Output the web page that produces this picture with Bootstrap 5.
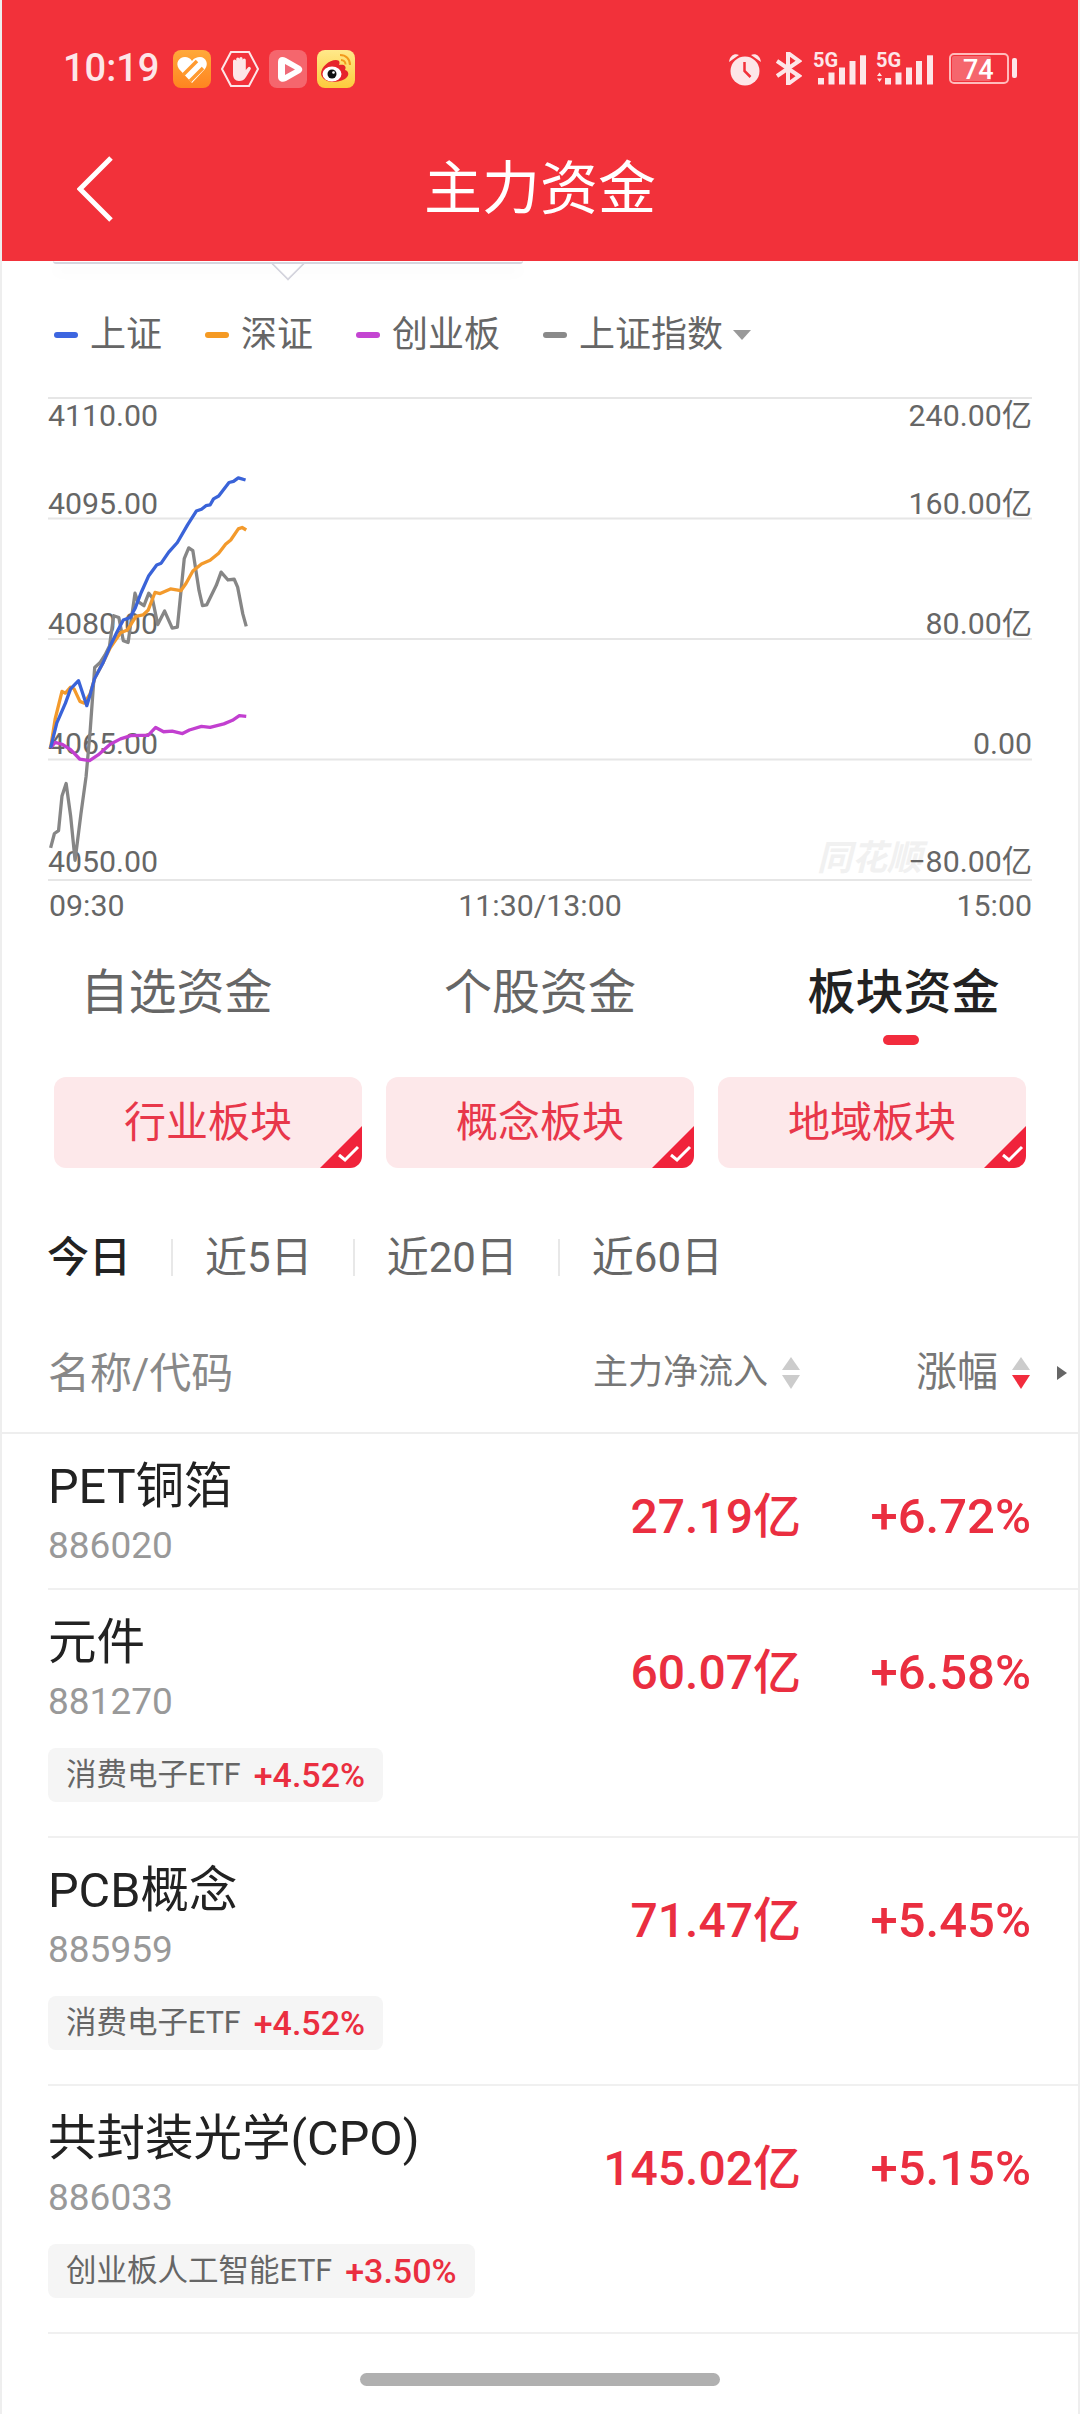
<!DOCTYPE html>
<html lang="zh">

<head>
    <meta charset="UTF-8">
    <meta name="viewport" content="width=device-width, initial-scale=1.0">
    <title>主力资金</title>
    <link href="https://cdn.jsdelivr.net/npm/bootstrap@5.3.3/dist/css/bootstrap.min.css" rel="stylesheet">
    <style>
        body {
            background-color: #fff;
            font-family: Roboto, "Noto Sans CJK SC", sans-serif;
            overflow: hidden;
        }

        .phone {
            width: 1080px;
            height: 2414px;
            overflow: hidden;
            border-left: 2px solid #eee;
            border-right: 2px solid #eee;
        }

        .top-bar {
            background-color: #f2313a;
            height: 261px;
            margin: 0 -2px;
            padding-top: 49px;
            color: #fff;
        }

        .status-row {
            height: 39px;
            padding: 0 63px;
        }

        .clock {
            font-size: 38px;
            font-weight: 500;
            color: #fde6e8;
            width: 110px;
            line-height: 39px;
        }

        .app-icons {
            gap: 10px;
        }

        .ic-bt {
            margin-left: 12px;
        }

        .ic-sig1 {
            margin-left: 11px;
        }

        .ic-sig2 {
            margin-left: 10px;
        }

        .ic-batt {
            margin-left: 16px;
        }

        .title-row {
            display: grid;
            grid-template-columns: 1fr auto 1fr;
            align-items: center;
            height: 82px;
            margin-top: 60px;
        }

        .back-col {
            padding-left: 77px;
        }

        .page-title {
            font-size: 58px;
            font-weight: 400;
            line-height: 82px;
        }

        .pop-stub {
            width: 470px;
            height: 3px;
            margin-left: 51px;
            border-bottom: 2px solid #d5d5de;
            border-radius: 0 0 8px 8px;
            box-shadow: 0 8px 14px rgba(0, 0, 0, .05);
            position: relative;
        }

        .pop-stub::after {
            content: "";
            position: absolute;
            left: 223px;
            top: -9px;
            width: 24px;
            height: 24px;
            background: #fff;
            border-right: 2px solid #d5d5de;
            border-bottom: 2px solid #d5d5de;
            transform: rotate(45deg);
            clip-path: polygon(100% 0, 100% 100%, 0 100%);
        }

        .legend-row {
            height: 50px;
            margin-top: 46px;
            padding-left: 52px;
            gap: 43px;
            font-size: 36px;
            color: #666;
        }

        .legend-item {
            gap: 12px;
        }

        .legend-dash {
            width: 24px;
            height: 6px;
            border-radius: 3px;
        }

        .dash-sh {
            background-color: #3d66e0;
        }

        .dash-sz {
            background-color: #f59a23;
        }

        .dash-cy {
            background-color: #c445d2;
        }

        .dash-idx {
            background-color: #8a8a8a;
        }

        .legend-caret {
            width: 0;
            height: 0;
            border-left: 9px solid transparent;
            border-right: 9px solid transparent;
            border-top: 10px solid #999;
            margin-left: -33px;
        }

        .chart-box {
            display: block;
            margin: 20px 0 0 -2px;
        }

        .chart-box text {
            font-family: Roboto, "Noto Sans CJK SC", sans-serif;
            font-size: 30.300px;
            fill: #666;
        }

        .chart-box .mark-text {
            font-size: 35px;
            font-weight: 700;
            font-style: italic;
            fill: #f1f1f1;
        }

        .chart-line {
            vector-effect: non-scaling-stroke;
            stroke-width: 3.300px;
            stroke-linejoin: round;
            fill: none;
        }

        .tab-grid {
            display: grid;
            grid-template-columns: repeat(3, 363.500px);
            justify-content: center;
            margin-top: 20px;
        }

        .tab-text {
            font-size: 48px;
            line-height: 60px;
            padding-top: 3px;
            color: #666;
        }

        .tab-on .tab-text {
            color: #222;
            font-weight: 500;
        }

        .tab-mark {
            width: 36px;
            height: 10px;
            margin: 12px 5px 0 0;
            border-radius: 5px;
        }

        .tab-on .tab-mark {
            background-color: #f22c3d;
        }

        .chip-row {
            gap: 24px;
            margin-top: 32px;
            padding-left: 52px;
        }

        .plate-chip {
            width: 308px;
            height: 91px;
            border-radius: 12px;
            background-color: #fde8ea;
            color: #e8374a;
            font-size: 42px;
            position: relative;
            overflow: hidden;
        }

        .chip-corner {
            position: absolute;
            right: 0;
            bottom: 0;
        }

        .period-row {
            height: 60px;
            margin-top: 59px;
            padding-left: 45px;
            font-size: 42px;
            color: #666;
        }

        .period-on {
            color: #222;
            font-weight: 500;
        }

        .period-sep {
            width: 2px;
            height: 37px;
            background-color: #e8e8e8;
            margin: 0 32px 0 40px;
        }

        .list-head {
            height: 120px;
            margin-top: 27px;
            padding-left: 46px;
            border-bottom: 2px solid #eee;
            color: #888;
        }

        .head-name {
            font-size: 42px;
        }

        .head-flow {
            font-size: 35px;
            color: #777;
            margin-left: auto;
        }

        .head-rise {
            font-size: 41px;
            margin-left: 116px;
            color: #777;
        }

        .sort-arrows {
            margin-left: 14px;
            gap: 5px;
        }

        .tri-up,
        .tri-down {
            width: 0;
            height: 0;
            border-left: 9px solid transparent;
            border-right: 9px solid transparent;
        }

        .tri-up {
            border-bottom: 13px solid #ccc;
        }

        .tri-down {
            border-top: 14px solid #ccc;
        }

        .tri-down.is-red {
            border-top-color: #f22c3d;
        }

        .more-tri {
            width: 0;
            height: 0;
            margin: 0 11px 0 27px;
            border-top: 7px solid transparent;
            border-bottom: 7px solid transparent;
            border-left: 10px solid #666;
        }

        .stock-row {
            margin-left: 46px;
            border-bottom: 2px solid #f0f0f0;
        }

        .stock-head {
            height: 154px;
        }

        .stock-id {
            padding-top: 23px;
            align-self: flex-start;
        }

        .stock-name {
            font-size: 48.500px;
            line-height: 60px;
            color: #222;
        }

        .stock-code {
            font-size: 37px;
            line-height: 50px;
            margin-top: 4px;
            color: #999;
        }

        .stock-vals {
            margin-left: auto;
            padding: 12px 47px 0 0;
            font-size: 48px;
            font-weight: 500;
            color: #ea2e40;
        }

        .stock-pct {
            width: 230px;
            font-size: 49px;
        }

        .etf-tag {
            height: 54px;
            margin: 4px 0 34px;
            padding: 0 18px;
            gap: 13px;
            border-radius: 8px;
            background-color: #f5f5f5;
            font-size: 30.500px;
            color: #666;
        }

        .etf-pct {
            font-size: 34px;
            font-weight: 500;
            color: #ea2e40;
        }

        .home-bar {
            width: 360px;
            height: 13px;
            margin: 39px auto 0;
            border-radius: 7px;
            background-color: #b0b0b0;
        }
    </style>
</head>

<body>
    <div class="phone">
        <div class="top-bar">
            <div class="status-row d-flex align-items-center">
                <div class="clock">10:19</div>
                <div class="app-icons d-flex align-items-center">
                    <svg width="38" height="38" viewBox="0 0 38 38">
                        <defs>
                            <linearGradient id="org" x1="0" y1="0" x2="0" y2="1">
                                <stop offset="0" stop-color="#ffa93a" />
                                <stop offset="1" stop-color="#ff8420" />
                            </linearGradient>
                        </defs>
                        <rect width="38" height="38" rx="8" fill="url(#org)" />
                        <path d="M19 33 L6 19 C2 13 6 7 12 7 C15 7 17 8 19 11 C21 8 24 7 27 7 C33 7 36 14 32 19 Z" fill="#fff" />
                        <path d="M10 25 L24 11 M17 31 L30 18" stroke="#ff9a30" stroke-width="3.500" fill="none" />
                    </svg>
                    <svg width="38" height="38" viewBox="0 0 38 38">
                        <path d="M10 2 H28 L37 19 L28 36 H10 L1 19 Z" fill="none" stroke="#fde6e8" stroke-width="2" />
                        <path d="M12 18 V11 a1.600 1.600 0 0 1 3.200 0 V9 a1.600 1.600 0 0 1 3.200 0 V8.500 a1.600 1.600 0 0 1 3.200 0 V10 a1.600 1.600 0 0 1 3.200 0 V20 L27 17.500 a1.600 1.600 0 0 1 2.500 2 L25 27 C23 30 21 31 18 31 C14 31 12 28 12 24 Z" fill="#fde6e8" />
                    </svg>
                    <svg width="38" height="38" viewBox="0 0 38 38">
                        <rect width="38" height="38" rx="8" fill="#fff" fill-opacity=".26" />
                        <path d="M9 12 C9 7 13 6 17 8 L31 16 C34 18 34 21 31 23 L17 31 C13 33 9 31 9 27 Z" fill="#fff" />
                        <path d="M16 14 L26 19.500 L16 25 Z" fill="#ef6a78" />
                    </svg>
                    <svg width="38" height="38" viewBox="0 0 38 38">
                        <defs>
                            <linearGradient id="yel" x1="0" y1="0" x2="0" y2="1">
                                <stop offset="0" stop-color="#ffe98a" />
                                <stop offset="1" stop-color="#fdcb3c" />
                            </linearGradient>
                        </defs>
                        <rect width="38" height="38" rx="8" fill="url(#yel)" />
                        <path d="M4 24 C4 17 12 10 19 10 C23 10 23 13 22 15 C27 14 30 16 28 20 C32 21 32 25 30 27 C26 33 6 35 4 24 Z" fill="#e6242b" />
                        <ellipse cx="15" cy="24" rx="9.500" ry="7.500" fill="#fff" />
                        <circle cx="15" cy="24" r="4.500" fill="#111" />
                        <circle cx="16.500" cy="22.500" r="1.300" fill="#fff" />
                        <path d="M23 5 C29 5 33 9 33 15 M24 10 C26.500 10 28.500 12 28.500 14.500" fill="none" stroke="#f39a1c" stroke-width="2" />
                    </svg>
                </div>
                <div class="d-flex align-items-center ms-auto">
                    <svg width="36" height="34" viewBox="0 0 36 34">
                        <circle cx="18" cy="19" r="14.500" fill="#fde6e8" />
                        <path d="M2 10 C3 3 8 1 12 3 Z M34 10 C33 3 28 1 24 3 Z" fill="#fde6e8" />
                        <path d="M17.500 10 V19 L23.500 25" fill="none" stroke="#f2313a" stroke-width="2.500" />
                    </svg>
                    <svg class="ic-bt" width="27" height="33" viewBox="0 0 27 33">
                        <path d="M2 9 L24 24 L13 32 V1 L24 9 L2 24" fill="none" stroke="#fde6e8" stroke-width="4" />
                    </svg>
                    <svg class="ic-sig1" width="53" height="47" viewBox="0 -7 53 47">
                        <text x="0" y="15" font-size="20" font-weight="700" fill="#fde6e8" font-family="Roboto">5G</text>
                        <g fill="#fde6e8">
                            <rect x="5" y="26" width="6" height="6.500" />
                            <rect x="15.500" y="20.500" width="6" height="12" />
                            <rect x="26" y="15.500" width="6" height="17" />
                            <rect x="36.500" y="9" width="6" height="23.500" />
                            <rect x="47" y="3.300" width="6" height="29.200" />
                        </g>
                    </svg>
                    <svg class="ic-sig2" width="57" height="47" viewBox="0 -7 57 47">
                        <text x="0" y="15" font-size="20" font-weight="700" fill="#fde6e8" font-family="Roboto">5G</text>
                        <g fill="#fde6e8">
                            <path d="M1 24 L3.500 20.500 L6 24 Z M1 26.500 L3.500 30 L6 26.500 Z" />
                            <rect x="9" y="26" width="6" height="6.500" />
                            <rect x="19.500" y="20.500" width="6" height="12" />
                            <rect x="30" y="15.500" width="6" height="17" />
                            <rect x="40" y="9" width="6" height="23.500" />
                            <rect x="51" y="3.300" width="6" height="29.200" />
                        </g>
                    </svg>
                    <svg class="ic-batt" width="68" height="32" viewBox="0 0 68 32">
                        <rect x="1" y="1" width="58" height="29" rx="4" fill="none" stroke="#fbb" stroke-width="2" />
                        <rect x="3" y="3" width="39" height="25" rx="2" fill="#fff" fill-opacity=".26" />
                        <text x="14" y="26" font-size="27" font-weight="500" fill="#fff" font-family="Roboto">74</text>
                        <rect x="63" y="5" width="5" height="20" rx="2" fill="#fde6e8" />
                    </svg>
                </div>
            </div>
            <div class="title-row">
                <div class="back-col">
                    <svg width="36" height="66" viewBox="0 0 36 66">
                        <path d="M34 2 L3 33 L34 64" fill="none" stroke="#fff" stroke-width="5" />
                    </svg>
                </div>
                <div class="page-title">主力资金</div>
                <div></div>
            </div>
        </div>

        <div class="pop-stub"></div>

        <div class="legend-row d-flex align-items-center">
            <div class="legend-item d-flex align-items-center"><span class="legend-dash dash-sh"></span><span>上证</span></div>
            <div class="legend-item d-flex align-items-center"><span class="legend-dash dash-sz"></span><span>深证</span></div>
            <div class="legend-item d-flex align-items-center"><span class="legend-dash dash-cy"></span><span>创业板</span></div>
            <div class="legend-item d-flex align-items-center"><span class="legend-dash dash-idx"></span><span>上证指数</span></div>
            <span class="legend-caret"></span>
        </div>

        <svg class="chart-box" width="1080" height="560" viewBox="0 380 1080 560">
            <g stroke="#e6e6e6" stroke-width="2">
                <line x1="48" y1="398" x2="1032" y2="398" />
                <line x1="48" y1="518.500" x2="1032" y2="518.500" />
                <line x1="48" y1="639" x2="1032" y2="639" />
                <line x1="48" y1="759.500" x2="1032" y2="759.500" />
                <line x1="48" y1="880" x2="1032" y2="880" />
            </g>
            <text class="mark-text" x="817" y="870">同花顺</text>
            <text x="48" y="426">4110.00</text>
            <text x="48" y="514">4095.00</text>
            <text x="48" y="634">4080.00</text>
            <text x="48" y="754">4065.00</text>
            <text x="48" y="872">4050.00</text>
            <g text-anchor="end">
                <text x="1032" y="426">240.00亿</text>
                <text x="1032" y="514">160.00亿</text>
                <text x="1032" y="634">80.00亿</text>
                <text x="1032" y="754">0.00</text>
                <text x="1032" y="872">−80.00亿</text>
                <text x="1032" y="916">15:00</text>
            </g>
            <text x="49" y="916">09:30</text>
            <text x="540" y="916" text-anchor="middle">11:30/13:00</text>
            <g transform="translate(0 380) scale(.3444 .3571)">
                <polyline class="chart-line" stroke="#868686" points="147,1310 158,1270 170,1262 180,1165 192,1130 205,1220 218,1345 235,1215 250,1110 262,980 275,805 290,792 305,770 318,745 330,660 345,665 358,730 372,735 392,597 400,620 418,632 432,597 442,610 458,685 478,647 500,695 515,692 535,500 548,470 560,478 578,590 588,632 600,630 628,575 642,538 662,560 680,558 690,580 705,655 715,690" />
                <polyline class="chart-line" stroke="#f39a2c" points="147,1030 160,950 180,872 190,877 205,860 215,865 232,900 245,905 262,878 275,835 300,790 320,750 350,708 370,700 395,662 415,658 430,645 450,595 465,598 495,585 525,590 540,570 560,535 585,515 610,505 635,485 655,460 670,448 692,417 703,413 715,420" />
                <polyline class="chart-line" stroke="#c23fd0" points="147,1030 160,1015 180,1020 205,1035 232,1062 260,1066 285,1050 320,1020 350,1005 380,996 410,995 430,995 452,973 475,985 500,983 530,990 550,980 585,970 610,973 650,963 675,953 695,940 715,942" />
                <polyline class="chart-line" stroke="#3a63d8" points="147,1030 165,960 190,905 205,865 228,842 252,912 262,880 275,835 300,790 320,745 340,705 358,672 378,665 392,640 410,595 432,548 455,518 468,513 490,482 515,455 545,405 570,367 585,362 598,352 610,350 620,333 635,325 665,287 678,284 692,274 713,280" />
            </g>
        </svg>

        <div class="tab-grid text-center">
            <div class="d-flex flex-column align-items-center">
                <div class="tab-text">自选资金</div>
                <div class="tab-mark"></div>
            </div>
            <div class="d-flex flex-column align-items-center">
                <div class="tab-text">个股资金</div>
                <div class="tab-mark"></div>
            </div>
            <div class="tab-on d-flex flex-column align-items-center">
                <div class="tab-text">板块资金</div>
                <div class="tab-mark"></div>
            </div>
        </div>

        <div class="chip-row d-flex">
            <div class="plate-chip d-flex align-items-center justify-content-center">行业板块
                <svg class="chip-corner" width="42" height="42" viewBox="0 0 42 42">
                    <path d="M42 0 V42 H0 Z" fill="#f0233b" />
                    <path d="M19 29 L25 34 L38 21" fill="none" stroke="#fff" stroke-width="3" />
                </svg>
            </div>
            <div class="plate-chip d-flex align-items-center justify-content-center">概念板块
                <svg class="chip-corner" width="42" height="42" viewBox="0 0 42 42">
                    <path d="M42 0 V42 H0 Z" fill="#f0233b" />
                    <path d="M19 29 L25 34 L38 21" fill="none" stroke="#fff" stroke-width="3" />
                </svg>
            </div>
            <div class="plate-chip d-flex align-items-center justify-content-center">地域板块
                <svg class="chip-corner" width="42" height="42" viewBox="0 0 42 42">
                    <path d="M42 0 V42 H0 Z" fill="#f0233b" />
                    <path d="M19 29 L25 34 L38 21" fill="none" stroke="#fff" stroke-width="3" />
                </svg>
            </div>
        </div>

        <div class="period-row d-flex align-items-center">
            <span class="period-on">今日</span><i class="period-sep"></i>
            <span>近5日</span><i class="period-sep"></i>
            <span>近20日</span><i class="period-sep"></i>
            <span>近60日</span>
        </div>

        <div class="list-head d-flex align-items-center">
            <span class="head-name">名称/代码</span>
            <span class="head-flow">主力净流入</span>
            <span class="sort-arrows d-flex flex-column"><i class="tri-up"></i><i class="tri-down"></i></span>
            <span class="head-rise">涨幅</span>
            <span class="sort-arrows d-flex flex-column"><i class="tri-up"></i><i class="tri-down is-red"></i></span>
            <i class="more-tri"></i>
        </div>

        <div class="stock-row">
            <div class="stock-head d-flex align-items-center">
                <div class="stock-id">
                    <div class="stock-name">PET铜箔</div>
                    <div class="stock-code">886020</div>
                </div>
                <div class="stock-vals d-flex align-items-center">
                    <div>27.19亿</div>
                    <div class="stock-pct text-end">+6.72%</div>
                </div>
            </div>
        </div>
        <div class="stock-row">
            <div class="stock-head d-flex align-items-center">
                <div class="stock-id">
                    <div class="stock-name">元件</div>
                    <div class="stock-code">881270</div>
                </div>
                <div class="stock-vals d-flex align-items-center">
                    <div>60.07亿</div>
                    <div class="stock-pct text-end">+6.58%</div>
                </div>
            </div>
            <div class="etf-tag d-inline-flex align-items-center"><span>消费电子ETF</span><span class="etf-pct">+4.52%</span></div>
        </div>
        <div class="stock-row">
            <div class="stock-head d-flex align-items-center">
                <div class="stock-id">
                    <div class="stock-name">PCB概念</div>
                    <div class="stock-code">885959</div>
                </div>
                <div class="stock-vals d-flex align-items-center">
                    <div>71.47亿</div>
                    <div class="stock-pct text-end">+5.45%</div>
                </div>
            </div>
            <div class="etf-tag d-inline-flex align-items-center"><span>消费电子ETF</span><span class="etf-pct">+4.52%</span></div>
        </div>
        <div class="stock-row">
            <div class="stock-head d-flex align-items-center">
                <div class="stock-id">
                    <div class="stock-name">共封装光学(CPO)</div>
                    <div class="stock-code">886033</div>
                </div>
                <div class="stock-vals d-flex align-items-center">
                    <div>145.02亿</div>
                    <div class="stock-pct text-end">+5.15%</div>
                </div>
            </div>
            <div class="etf-tag d-inline-flex align-items-center"><span>创业板人工智能ETF</span><span class="etf-pct">+3.50%</span></div>
        </div>

        <div class="home-bar"></div>
    </div>

    <script src="https://cdn.jsdelivr.net/npm/bootstrap@5.3.3/dist/js/bootstrap.bundle.min.js"></script>
</body>

</html>
